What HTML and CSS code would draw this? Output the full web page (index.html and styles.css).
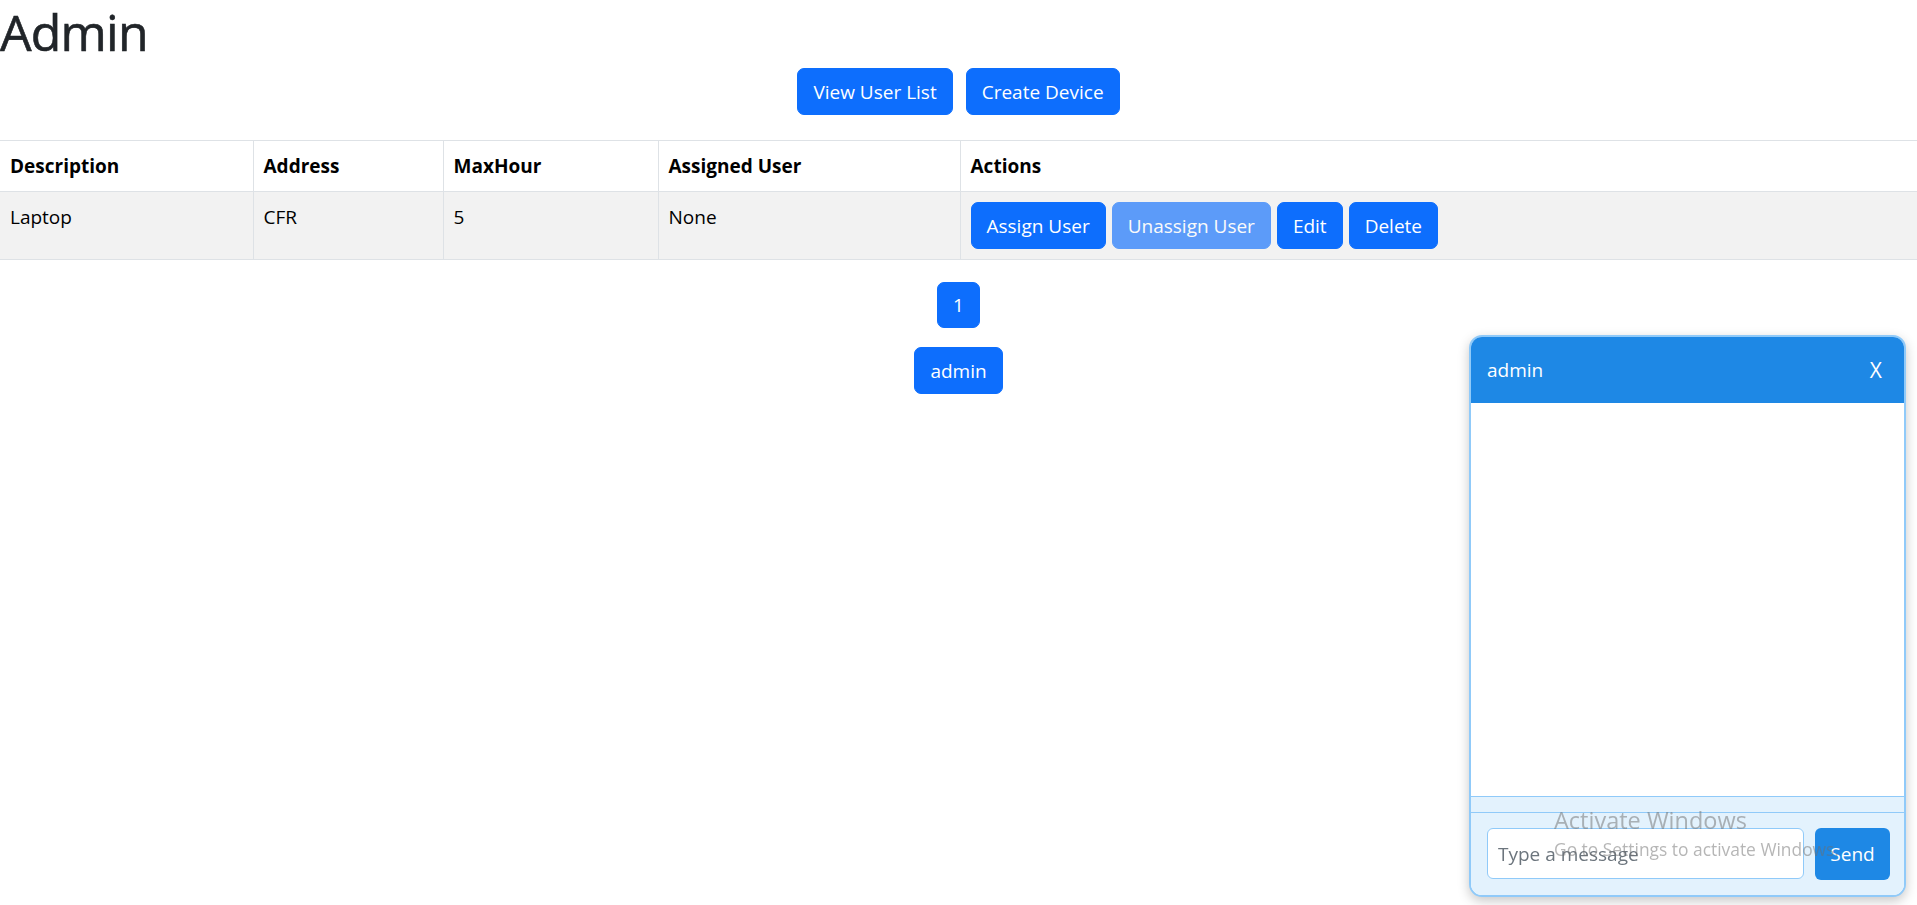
FILE: index.html
```html
<!DOCTYPE html>
<html lang="en">
<head>
<meta charset="utf-8">
<title>Admin</title>
<link rel="stylesheet" href="styles.css">
</head>
<body>
<h1 class="title">Admin</h1>
<div class="toolbar">
  <button class="btn">View User List</button>
  <button class="btn">Create Device</button>
</div>
<table class="devices">
  <colgroup>
    <col class="c1"><col class="c2"><col class="c3"><col class="c4"><col class="c5">
  </colgroup>
  <thead>
    <tr>
      <th>Description</th>
      <th>Address</th>
      <th>MaxHour</th>
      <th>Assigned User</th>
      <th>Actions</th>
    </tr>
  </thead>
  <tbody>
    <tr class="striped">
      <td>Laptop</td>
      <td>CFR</td>
      <td>5</td>
      <td>None</td>
      <td>
        <div class="actions">
          <button class="btn">Assign User</button>
          <button class="btn" disabled>Unassign User</button>
          <button class="btn">Edit</button>
          <button class="btn">Delete</button>
        </div>
      </td>
    </tr>
  </tbody>
</table>
<div class="pager">
  <span class="page-link">1</span>
</div>
<div class="userbar">
  <button class="btn">admin</button>
</div>

<div class="chat">
  <div class="chat-head">
    <span class="chat-name">admin</span>
    <span class="chat-close">X</span>
  </div>
  <div class="chat-body"></div>
  <div class="chat-strip"></div>
  <div class="chat-foot">
    <input class="chat-input" type="text" placeholder="Type a message">
    <button class="chat-send">Send</button>
  </div>
</div>

<div class="watermark">
  <div class="wm-title">Activate Windows</div>
  <div class="wm-sub">Go to Settings to activate Windows.</div>
</div>
</body>
</html>
```
FILE: styles.css
```css
* { box-sizing: border-box; }

body {
  margin: 0;
  font-family: "Open Sans", "Noto Sans", sans-serif;
  font-size: 19px;
  line-height: 30px;
  color: #212529;
  background: #fff;
}

.title {
  margin: 0 0 6px 0;
  padding-top: 2px;
  font-size: 50px;
  line-height: 60px;
  font-weight: 500;
  -webkit-text-stroke: 0.6px #212529;
  letter-spacing: -0.8px;
  color: #212529;
}

.btn {
  font-family: inherit;
  font-size: 19px;
  line-height: 30px;
  padding: 7.5px 15px;
  border: 1px solid #0d6efd;
  border-radius: 7px;
  background: #0d6efd;
  color: #fff;
  cursor: pointer;
}
.btn:disabled {
  opacity: 0.65;
  cursor: default;
}

.toolbar {
  display: flex;
  justify-content: center;
  gap: 13px;
  margin-bottom: 25px;
}

.devices {
  width: 100%;
  border-collapse: collapse;
  table-layout: fixed;
  color: #000;
}
.devices .c1 { width: 253px; }
.devices .c2 { width: 190px; }
.devices .c3 { width: 215px; }
.devices .c4 { width: 302px; }
.devices th,
.devices td {
  padding: 10px;
  text-align: left;
  vertical-align: top;
  border-top: 1px solid #dee2e6;
  border-bottom: 1px solid #dee2e6;
  border-left: 1px solid #dee2e6;
}
.devices th:first-child,
.devices td:first-child { border-left: none; }
.devices th { font-weight: 700; }
.devices td { font-weight: 400; }
.striped td { background: #f2f2f2; }

.actions {
  display: flex;
  gap: 6px;
}

.pager {
  display: flex;
  justify-content: center;
  margin-top: 22px;
  margin-bottom: 19px;
}
.page-link {
  display: block;
  padding: 7px 15px;
  border: 1px solid #0d6efd;
  border-radius: 7px;
  background: #0d6efd;
  color: #fff;
  line-height: 30px;
}

.userbar {
  display: flex;
  justify-content: center;
}

.chat {
  position: fixed;
  right: 11px;
  bottom: 8px;
  width: 437px;
  height: 562px;
  display: flex;
  flex-direction: column;
  border: 2px solid #90caf9;
  border-radius: 13px;
  overflow: hidden;
  background: #fff;
  box-shadow: 0 4px 12px rgba(0, 0, 0, 0.22);
}
.chat-head {
  height: 66px;
  flex: none;
  display: flex;
  align-items: center;
  justify-content: space-between;
  padding: 0 22px 0 16px;
  background: #1e88e5;
  color: #fff;
  font-size: 19px;
}
.chat-close { font-size: 21px; }
.chat-body {
  flex: 1;
  background: #fff;
}
.chat-strip {
  flex: none;
  height: 17px;
  background: #e3f2fd;
  border-top: 1px solid #90caf9;
  border-bottom: 1px solid #90caf9;
}
.chat-foot {
  flex: none;
  display: flex;
  gap: 11px;
  padding: 15px 14px 15px 16px;
  background: #e3f2fd;
}
.chat-input {
  flex: 1;
  height: 51px;
  padding: 0 10px;
  border: 1px solid #90caf9;
  border-radius: 6px;
  font-family: inherit;
  font-size: 19px;
  color: #212529;
  background: #fff;
}
.chat-input::placeholder { color: #6c757d; }
.chat-send {
  width: 75px;
  height: 52px;
  border: none;
  border-radius: 6px;
  background: #1e88e5;
  color: #fff;
  font-family: inherit;
  font-size: 19px;
}

.watermark {
  position: fixed;
  left: 1554px;
  top: 805px;
  pointer-events: none;
  color: rgba(110, 110, 110, 0.5);
  white-space: nowrap;
}
.wm-title {
  font-size: 23.5px;
  line-height: 30px;
}
.wm-sub {
  font-size: 17.4px;
  line-height: 24px;
  margin-top: 2px;
}
```
